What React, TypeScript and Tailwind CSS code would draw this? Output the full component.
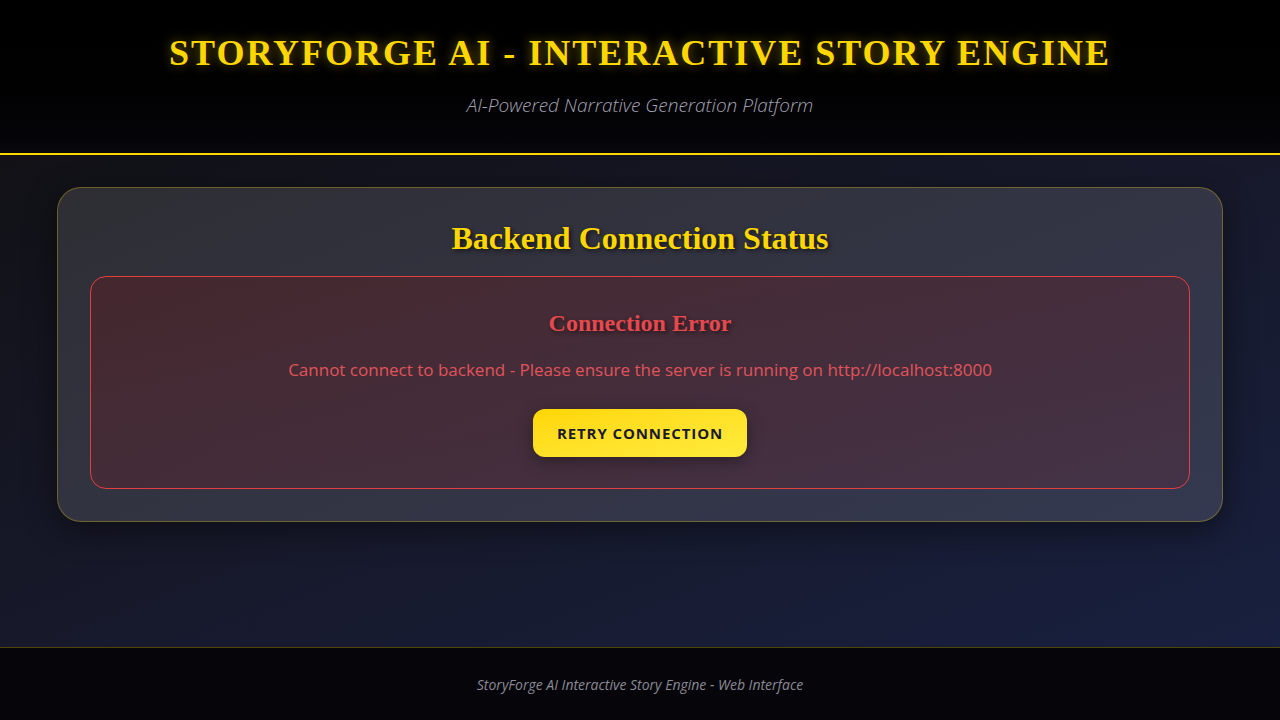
import React from "react";

export default function App() {
  const sans = "font-['Segoe_UI','Open_Sans',sans-serif]";

  return (
    <div className={`min-h-screen flex flex-col bg-black ${sans}`}>
      {/* header */}
      <header className="h-[155px] flex flex-col items-center border-b-2 border-[#ffd700] bg-gradient-to-b from-[#000000] to-[#07070c]">
        <h1 className="mt-[33px] font-['Liberation_Serif',serif] font-bold text-[36px] leading-[40px] tracking-[2px] text-[#ffd700] [text-shadow:0_0_12px_rgba(255,215,0,0.45),0_2px_4px_rgba(0,0,0,0.8)]">
          STORYFORGE AI - INTERACTIVE STORY ENGINE
        </h1>
        <p className="mt-[18px] text-[19px] leading-[28px] italic font-light text-[#a3a3b3]">
          AI-Powered Narrative Generation Platform
        </p>
      </header>

      {/* main */}
      <main className="h-[492px] px-[57px] pt-[32px] bg-gradient-to-br from-[#111116] via-[#17192b] to-[#18203f]">
        <section className="rounded-[24px] border border-[#ffd700]/30 bg-white/[0.12] px-[32px] pt-[30px] pb-[32px] shadow-[0_8px_32px_rgba(0,0,0,0.45)]">
          <h2 className="text-center font-['Liberation_Serif',serif] font-bold text-[32px] leading-[40px] text-[#ffd700] [text-shadow:2px_2px_4px_rgba(0,0,0,0.6)]">
            Backend Connection Status
          </h2>

          <div className="mt-[18px] rounded-[16px] border border-[#e53e3e] bg-gradient-to-br from-[#5a1f24]/50 to-[#5a2a3c]/40 flex flex-col items-center pt-[30px] pb-[31px]">
            <h3 className="font-['Liberation_Serif',serif] font-bold text-[24px] leading-[32px] text-[#e5484d] [text-shadow:2px_2px_4px_rgba(0,0,0,0.5)]">
              Connection Error
            </h3>
            <p className="mt-[19px] text-[17px] leading-[24px] text-[#e0545a]">
              Cannot connect to backend - Please ensure the server is running on http://localhost:8000
            </p>
            <button className="mt-[27px] h-[48px] w-[214px] rounded-[12px] bg-gradient-to-br from-[#ffd700] to-[#ffeb3b] text-[15px] font-bold tracking-[0.9px] text-[#1a1a2e] shadow-[0_4px_15px_rgba(0,0,0,0.35)]">
              RETRY CONNECTION
            </button>
          </div>
        </section>
      </main>

      {/* footer */}
      <footer className="h-[73px] flex items-center justify-center border-t border-[#ffd700]/30 bg-[#05050a]">
        <p className="text-[14px] italic text-[#8a8a94]">
          StoryForge AI Interactive Story Engine - Web Interface
        </p>
      </footer>
    </div>
  );
}
